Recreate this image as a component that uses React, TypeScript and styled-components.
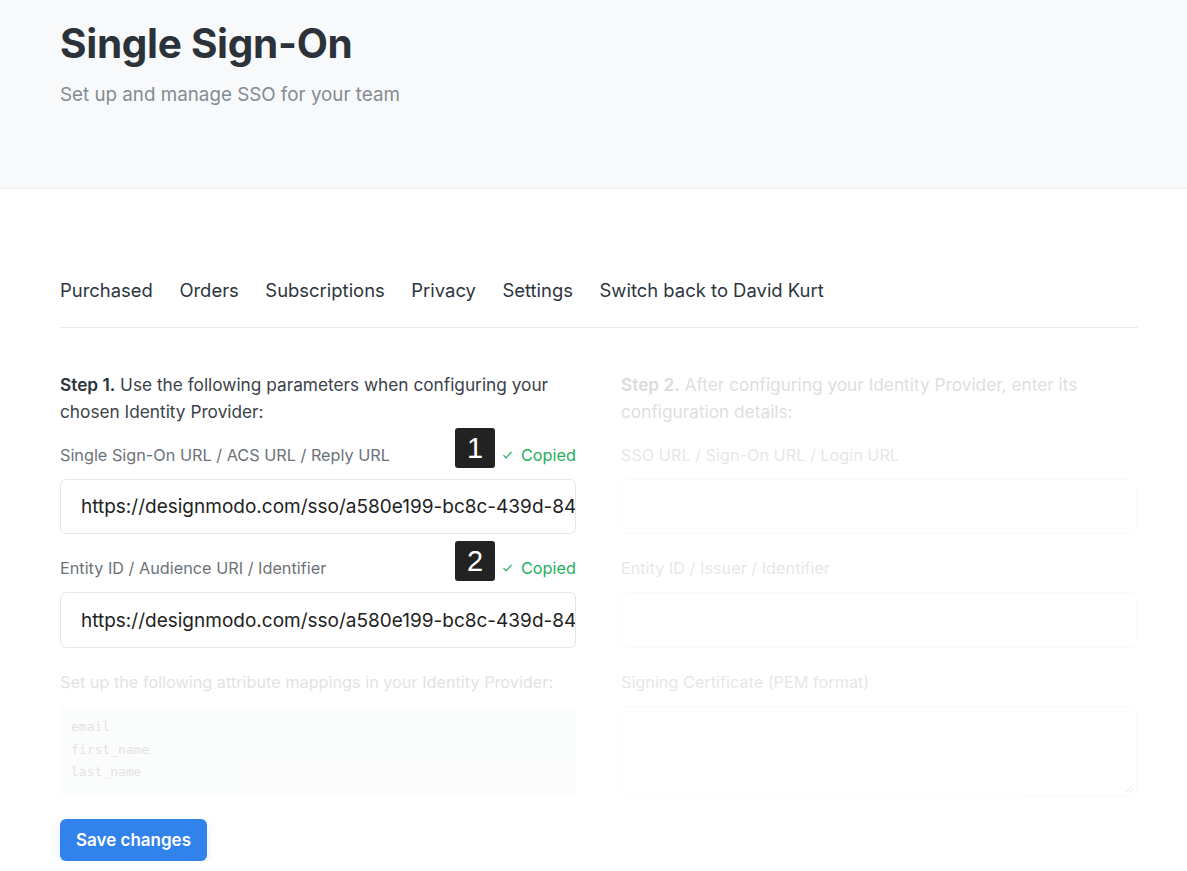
import React from "react";
import styled, { createGlobalStyle } from "styled-components";

const Global = createGlobalStyle`
  html, body { margin: 0; padding: 0; background: #fff; }
  body { font-family: Inter, "Noto Sans", sans-serif; color: #2d333a; }
  * { box-sizing: border-box; }
`;

const Header = styled.header`
  background: #f8f9fb;
  border-bottom: 1px solid #eceef1;
  height: 189px;
  padding: 18px 60px 0;
`;

const Title = styled.h1`
  margin: 0;
  font-size: 40.5px;
  line-height: 52px;
  font-weight: 700;
  color: #2b323a;
  letter-spacing: -0.3px;
`;

const Subtitle = styled.p`
  margin: 12px 0 0;
  font-size: 18.8px;
  line-height: 26px;
  color: #858b93;
`;

const Main = styled.main`
  padding: 88px 49px 0 60px;
`;

const Tabs = styled.nav`
  display: flex;
  gap: 26.5px;
  padding-bottom: 23px;
  border-bottom: 1px solid #e8eaed;
`;

const Tab = styled.a`
  font-size: 18.45px;
  line-height: 27px;
  color: #2d353e;
  text-decoration: none;
`;

const Columns = styled.div`
  display: grid;
  grid-template-columns: 516px 516px;
  column-gap: 45px;
  padding-top: 43px;
`;

const Column = styled.section<{ $faded?: boolean }>`
  display: flex;
  flex-direction: column;
  opacity: ${(p) => (p.$faded ? 0.17 : 1)};
`;

const Intro = styled.p`
  margin: 0;
  font-size: 17.25px;
  line-height: 27px;
  color: #3a4149;
  strong { font-weight: 600; color: #2b323a; }
`;

const FieldHead = styled.div<{ $top: number }>`
  display: flex;
  align-items: flex-end;
  height: 40px;
  margin-top: ${(p) => p.$top}px;
`;

const Label = styled.label`
  flex: 1;
  font-size: 16.25px;
  line-height: 24px;
  color: #6c727a;
  margin-bottom: 1px;
`;

const Badge = styled.span`
  width: 40px;
  height: 40px;
  background: #222;
  border-radius: 3px;
  color: #fff;
  font-family: "Liberation Sans", Arial, sans-serif;
  font-size: 29px;
  display: flex;
  align-items: center;
  justify-content: center;
`;

const Copied = styled.span`
  margin-left: 8px;
  font-size: 16.3px;
  line-height: 24px;
  color: #27ae60;
  margin-bottom: 1px;
  display: flex;
  align-items: center;
  gap: 9px;
`;

const Input = styled.div<{ $top: number; $h: number }>`
  margin-top: ${(p) => p.$top}px;
  height: ${(p) => p.$h}px;
  border: 1px solid #e3e6ea;
  border-radius: 6px;
  padding: 0 20px;
  font-family: Inter, sans-serif;
  font-size: 19px;
  color: #222;
  display: flex;
  align-items: center;
  white-space: nowrap;
  overflow: hidden;
  background: #fff;
`;

const PlainLabel = styled.div<{ $top: number }>`
  margin-top: ${(p) => p.$top}px;
  font-size: 16.25px;
  line-height: 24px;
  color: #6c727a;
`;

const Faded = styled.div`
  opacity: 0.2;
`;

const Code = styled.pre`
  margin: 13px 0 0;
  height: 89px;
  background: #eef1f4;
  border-radius: 6px;
  padding: 9px 11px;
  font-family: "DejaVu Sans Mono", monospace;
  font-size: 13px;
  line-height: 22.5px;
  color: #6c727a;
`;

const TextArea = styled.div`
  position: relative;
  margin-top: 12px;
  height: 90px;
  border: 1px solid #e3e6ea;
  border-radius: 6px;
`;

const Grip = styled.svg`
  position: absolute;
  right: 2px;
  bottom: 2px;
`;

const SaveButton = styled.button`
  margin-top: 23px;
  width: 147px;
  height: 42px;
  border: none;
  border-radius: 6px;
  background: #3182ea;
  color: #fff;
  font-family: Inter, sans-serif;
  font-size: 17px;
  font-weight: 600;
  box-shadow: 0 4px 10px rgba(49, 130, 234, 0.15);
  cursor: pointer;
`;

const Check = () => (
  <svg width="9" height="8" viewBox="0 0 9 8" fill="none">
    <path d="M0.5 4.2 3 6.8 8.5 1" stroke="#27ae60" strokeWidth="1.2" />
  </svg>
);

const url = "https://designmodo.com/sso/a580e199-bc8c-439d-84f1-2c6e0bd1a7c3";

export default function App() {
  return (
    <>
      <Global />
      <Header>
        <Title>Single Sign-On</Title>
        <Subtitle>Set up and manage SSO for your team</Subtitle>
      </Header>
      <Main>
        <Tabs>
          {["Purchased", "Orders", "Subscriptions", "Privacy", "Settings", "Switch back to David Kurt"].map((t) => (
            <Tab key={t}>{t}</Tab>
          ))}
        </Tabs>
        <Columns>
          <Column>
            <Intro>
              <strong>Step 1.</strong> Use the following parameters when configuring your chosen Identity Provider:
            </Intro>
            <FieldHead $top={3}>
              <Label>Single Sign-On URL / ACS URL / Reply URL</Label>
              <Badge>1</Badge>
              <Copied><Check />Copied</Copied>
            </FieldHead>
            <Input $top={11} $h={55}>{url}</Input>
            <FieldHead $top={7}>
              <Label>Entity ID / Audience URI / Identifier</Label>
              <Badge>2</Badge>
              <Copied><Check />Copied</Copied>
            </FieldHead>
            <Input $top={11} $h={56}>{url}</Input>
            <Faded>
              <PlainLabel $top={22}>Set up the following attribute mappings in your Identity Provider:</PlainLabel>
              <Code>{"email\nfirst_name\nlast_name"}</Code>
            </Faded>
            <div>
              <SaveButton>Save changes</SaveButton>
            </div>
          </Column>
          <Column $faded>
            <Intro>
              <strong>Step 2.</strong> After configuring your Identity Provider, enter its configuration details:
            </Intro>
            <FieldHead $top={3}>
              <Label>SSO URL / Sign-On URL / Login URL</Label>
            </FieldHead>
            <Input $top={11} $h={55} />
            <FieldHead $top={7}>
              <Label>Entity ID / Issuer / Identifier</Label>
            </FieldHead>
            <Input $top={11} $h={56} />
            <PlainLabel $top={22}>Signing Certificate (PEM format)</PlainLabel>
            <TextArea>
              <Grip width="9" height="9" viewBox="0 0 9 9">
                <path d="M8 1 1 8M8 5 5 8" stroke="#888" strokeWidth="1" />
              </Grip>
            </TextArea>
          </Column>
        </Columns>
      </Main>
    </>
  );
}
